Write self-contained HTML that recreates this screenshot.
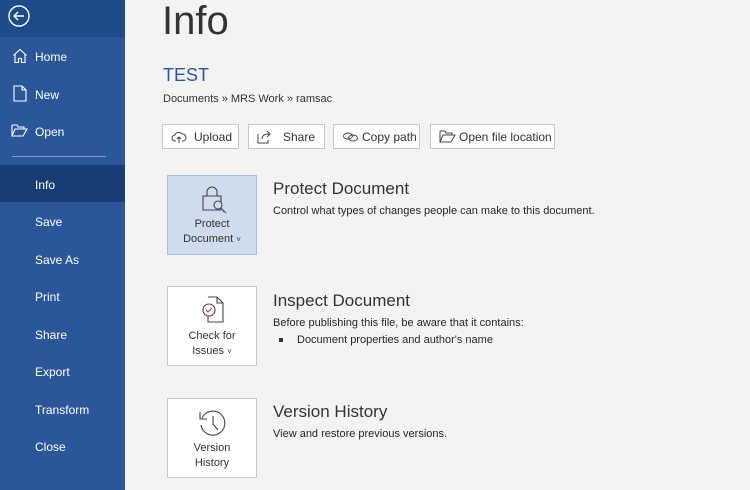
<!DOCTYPE html>
<html><head><meta charset="utf-8"><style>
*{margin:0;padding:0;box-sizing:border-box}
body{width:750px;height:490px;overflow:hidden;background:#f3f3f3;font-family:"Liberation Sans",sans-serif;position:relative;color:#262626}
.side{position:absolute;left:0;top:0;width:125px;height:490px;background:#2b579a;color:#fff}
.top{position:absolute;left:0;top:0;width:125px;height:37px;background:#1e4b8a}
.it{position:absolute;left:35px;font-size:12px;line-height:14px;color:#fff}
.sel{position:absolute;left:0;top:165px;width:125px;height:37px;background:#163e72}
.div{position:absolute;left:12px;top:156px;width:94px;height:1px;background:#7b9ccc}
.abs{position:absolute}
.btn{position:absolute;top:124px;height:25px;border:1px solid #c6c6c6;background:#fff;font-size:12px;line-height:24px;color:#333}
.btn svg{position:absolute;left:8px;top:5px}
.btn span{position:absolute;top:0}
.box{position:absolute;left:167px;width:90px;height:80px;border:1px solid #c6c6c6;background:#fff;font-size:11px;text-align:center;color:#333;line-height:15px}
.h{position:absolute;left:273px;font-size:17px;color:#333}
.d{position:absolute;left:273px;font-size:11px;color:#262626}
.cv{font-size:8px}
</style></head><body>
<div class="side">
<div class="top"></div>
<svg class="abs" style="left:7px;top:4px" width="24" height="24" viewBox="0 0 24 24" fill="none" stroke="#fff" stroke-width="1.4"><circle cx="12" cy="12" r="10"/><path d="M17 12H7M11 8l-4 4 4 4"/></svg>
<svg class="abs" style="left:12px;top:48px" width="16" height="16" viewBox="0 0 16 16" fill="none" stroke="#fff" stroke-width="1.1"><path d="M1.5 7.5L8 1.5l6.5 6M3 6.5v8h3.5v-4h3v4H13v-8"/></svg>
<svg class="abs" style="left:13px;top:85px" width="14" height="17" viewBox="0 0 14 17" fill="none" stroke="#fff" stroke-width="1.1"><path d="M1 1h8l4 4v11H1zM9 1v4h4"/></svg>
<svg class="abs" style="left:11px;top:124px" width="17" height="13" viewBox="0 0 17 13" fill="none" stroke="#fff" stroke-width="1.1"><path d="M1 1h5l1 2h6v2M1 1v11h11l4-7H4L1 12"/></svg>
<div class="it" style="top:50px">Home</div>
<div class="it" style="top:88px">New</div>
<div class="it" style="top:125px">Open</div>
<div class="div"></div>
<div class="sel"></div>
<div class="it" style="top:178px">Info</div>
<div class="it" style="top:215px">Save</div>
<div class="it" style="top:253px">Save As</div>
<div class="it" style="top:290px">Print</div>
<div class="it" style="top:328px">Share</div>
<div class="it" style="top:365px">Export</div>
<div class="it" style="top:403px">Transform</div>
<div class="it" style="top:440px">Close</div>
</div>
<div class="abs" style="left:162px;top:-1px;font-size:40px;color:#333">Info</div>
<div class="abs" style="left:163px;top:65px;font-size:18px;color:#2b579a">TEST</div>
<div class="abs" style="left:163px;top:93px;font-size:11px;color:#333">Documents » MRS Work » ramsac</div>

<div class="btn" style="left:162px;width:77px"><svg width="16" height="14" viewBox="0 0 16 14" fill="none" stroke="#444" stroke-width="1"><path d="M5 11H4a3 3 0 010-6 4 4 0 017-1 3 3 0 011 7h-1M8 13V7M6 9l2-2 2 2"/></svg><span style="left:31px">Upload</span></div>
<div class="btn" style="left:248px;width:77px"><svg width="16" height="14" viewBox="0 0 16 14" fill="none" stroke="#444" stroke-width="1"><path d="M1 4v9h10v-3M5 9c0-4 3-5 7-5M10 1l3 3-3 3"/></svg><span style="left:34px">Share</span></div>
<div class="btn" style="left:333px;width:87px"><svg width="18" height="14" viewBox="0 0 18 14" fill="none" stroke="#444" stroke-width="1"><ellipse cx="6" cy="6" rx="4.5" ry="3"/><ellipse cx="11" cy="8" rx="4.5" ry="3"/></svg><span style="left:28px">Copy path</span></div>
<div class="btn" style="left:430px;width:125px"><svg width="17" height="13" viewBox="0 0 17 13" fill="none" stroke="#444" stroke-width="1"><path d="M1 1h5l1 2h6v2M1 1v11h11l4-7H4L1 12"/></svg><span style="left:28px">Open file location</span></div>

<div class="box" style="top:175px;background:#cfdcee;border-color:#a9bfde">
<svg class="abs" style="left:34px;top:9px" width="26" height="30" viewBox="0 0 26 30" fill="none" stroke="#444" stroke-width="1.1"><path d="M5 11V7a5 5 0 0110 0v4M1 11h18v14H1z"/><circle cx="16" cy="20" r="4" fill="#cfdcee"/><path d="M19 23l5 5M22 26l-1 1" stroke="#2b579a"/></svg>
<div class="abs" style="left:0;width:88px;top:41px">Protect<br>Document <span class="cv">˅</span></div></div>
<div class="h" style="top:179px">Protect Document</div>
<div class="d" style="top:205px">Control what types of changes people can make to this document.</div>

<div class="box" style="top:286px">
<svg class="abs" style="left:33px;top:9px" width="24" height="28" viewBox="0 0 24 28" fill="none" stroke="#444" stroke-width="1.1"><path d="M7 1h9l6 6v19H7v-6M16 1v6h6"/><circle cx="8" cy="14" r="6" fill="#fff"/><path d="M5 14l2 2 4-4" stroke="#c0392b"/></svg>
<div class="abs" style="left:0;width:88px;top:42px">Check for<br>Issues <span class="cv">˅</span></div></div>
<div class="h" style="top:291px">Inspect Document</div>
<div class="d" style="top:317px">Before publishing this file, be aware that it contains:</div>
<div class="abs" style="left:279px;top:338px;width:4px;height:4px;background:#333"></div>
<div class="d" style="left:297px;top:334px">Document properties and author's name</div>

<div class="box" style="top:398px">
<svg class="abs" style="left:30px;top:9px" width="30" height="30" viewBox="0 0 30 30" fill="none" stroke="#444" stroke-width="1.1"><path d="M4 10a12 12 0 11-1 7M2 4v7h7M15 8v8l5 6"/></svg>
<div class="abs" style="left:0;width:88px;top:42px">Version<br>History</div></div>
<div class="h" style="top:402px">Version History</div>
<div class="d" style="top:428px">View and restore previous versions.</div>
</body></html>
